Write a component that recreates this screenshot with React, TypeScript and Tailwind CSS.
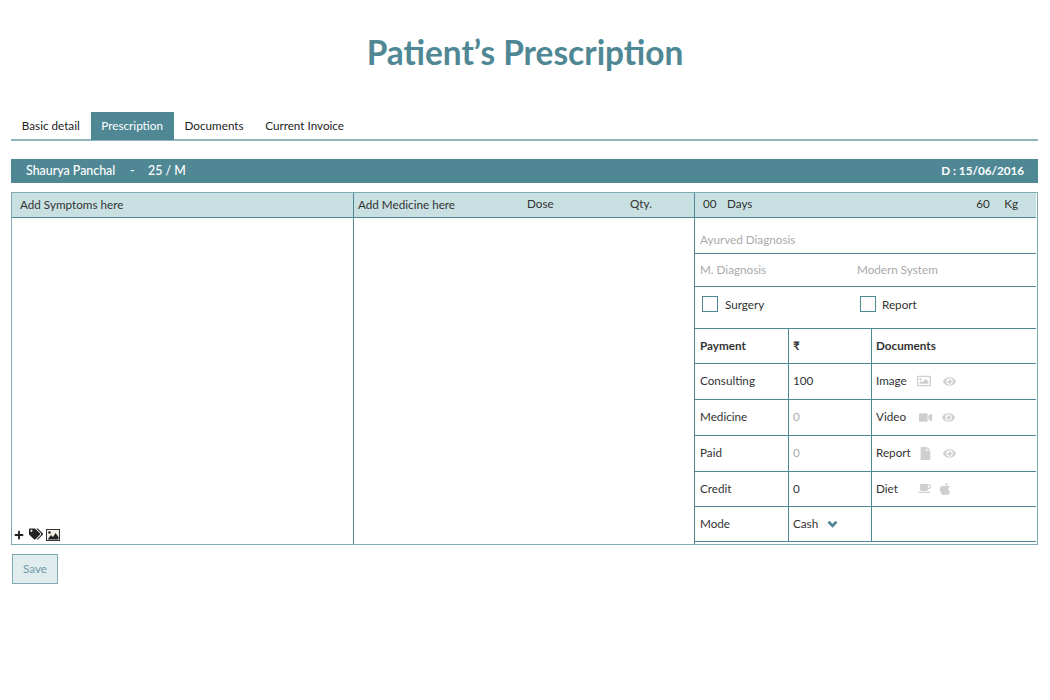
import { ReactNode } from "react";
import { FaPlus, FaTags, FaRegImage, FaEye, FaVideo, FaFile, FaCoffee, FaApple } from "react-icons/fa";

const TABS = ["Basic detail", "Prescription", "Documents", "Current Invoice"];

function Eye({ ml }: { ml: string }) {
  return <FaEye className={`${ml} text-[13px] text-[#cfcfcf]`} />;
}

function PayRow({ label, value, muted, bold, h, children }: { label: string; value: ReactNode; muted?: boolean; bold?: boolean; h: string; children?: ReactNode }) {
  return (
    <div className={`flex ${h} border-b border-[#4f8894] items-center`}>
      <div className={`w-[94px] h-full flex items-center pl-[5px] pb-[1px] border-r border-[#4f8894] ${bold ? "font-bold" : ""}`}>{label}</div>
      <div className={`w-[83px] h-full flex items-center pl-[4px] pb-[1px] border-r border-[#4f8894] ${muted ? "text-[#aaaaaa]" : ""}`}>{value}</div>
      <div className="flex-1 h-full flex items-center pl-[4px] pb-[1px]">{children}</div>
    </div>
  );
}

export default function App() {
  return (
    <div className="min-h-[700px] bg-white px-[11px] text-[11.7px] text-[#333333] [font-family:Lato,'Noto_Sans',sans-serif]">
      <h1 className="pt-[30px] h-[112px] text-center text-[33.4px] leading-[44px] font-bold text-[#4f8894]">Patient’s Prescription</h1>

      <div className="flex h-[29px] border-b-2 border-[#8fb6bd] w-[1027px]">
        {TABS.map((t) => (
          <div key={t} className={`h-[28px] px-[10.8px] flex items-center ${t === "Prescription" ? "bg-[#4f8894] text-white" : "text-[#222222]"}`}>{t}</div>
        ))}
      </div>

      <div className="mt-[18px] h-[24px] w-[1027px] bg-[#4f8894] text-white text-[12.4px] font-medium flex items-center justify-between pl-[15px] pr-[14px]">
        <span className="flex">
          <span className="w-[104px]">Shaurya Panchal</span>
          <span className="w-[18px]">-</span>
          <span>25 / M</span>
        </span>
        <span className="font-bold text-[11.7px]">D : 15/06/2016</span>
      </div>

      <div className="mt-[9px] w-[1027px] h-[353px] border border-[#7fabb3] flex">
        <div className="w-[342px] border-r border-[#4f8894] flex flex-col">
          <div className="h-[25px] bg-[#c8e0e2] border-b border-[#4f8894] pl-[8px] flex items-center">Add Symptoms here</div>
          <div className="flex-1 flex items-end pl-[2px] pb-[3px] text-[#222222]">
            <FaPlus className="text-[10px] mb-[1px]" />
            <FaTags className="ml-[5px] text-[14px]" />
            <svg viewBox="0 0 14 12" className="ml-[3px] w-[14px] h-[12px]">
              <rect x="0.5" y="0.5" width="13" height="11" fill="#f4f0e8" stroke="#333333" />
              <circle cx="3.5" cy="3.5" r="1.3" fill="#222222" />
              <path d="M1.5 10.5 L5 6 L7 8 L9.5 4 L12.5 8 V10.5 Z" fill="#222222" />
            </svg>
          </div>
        </div>
        <div className="w-[341px] border-r border-[#4f8894] flex flex-col">
          <div className="h-[25px] bg-[#c8e0e2] border-b border-[#4f8894] flex items-center relative">
            <span className="pl-[4px] w-[173px]">Add Medicine here</span>
            <span className="w-[103px] mb-[3px]">Dose</span>
            <span className="mb-[3px]">Qty.</span>
          </div>
        </div>
        <div className="flex-1 flex flex-col pr-[1px]">
          <div className="h-[25px] bg-[#c8e0e2] border-b border-[#4f8894] flex items-center pb-[2px] pl-[8px] pr-[18px]">
            <span className="w-[24px]">00</span>
            <span>Days</span>
            <span className="ml-auto w-[28px]">60</span>
            <span>Kg</span>
          </div>
          <div className="h-[36px] border-b border-[#4f8894] flex items-center pl-[5px] pt-[9px] text-[#aaaaaa]">Ayurved Diagnosis</div>
          <div className="h-[33px] border-b border-[#4f8894] flex items-center pl-[5px] text-[#aaaaaa]">
            <span className="w-[157px]">M. Diagnosis</span>
            <span>Modern System</span>
          </div>
          <div className="h-[42px] border-b border-[#4f8894] flex items-start pt-[9px] pl-[7px]">
            <span className="w-[16px] h-[16px] border border-[#4f8894] mr-[7px]" />
            <span className="w-[135px]">Surgery</span>
            <span className="w-[16px] h-[16px] border border-[#4f8894] mr-[6px]" />
            <span>Report</span>
          </div>
          <PayRow label="Payment" value={<b>₹</b>} bold h="h-[35px]">
            <b>Documents</b>
          </PayRow>
          <PayRow label="Consulting" value="100" h="h-[36px]">
            <span className="w-[41px]">Image</span>
            <FaRegImage className="text-[14px] text-[#cfcfcf]" />
            <Eye ml="ml-[12px]" />
          </PayRow>
          <PayRow label="Medicine" value="0" muted h="h-[36px]">
            <span className="w-[43px]">Video</span>
            <FaVideo className="text-[13px] text-[#cfcfcf]" />
            <Eye ml="ml-[10px]" />
          </PayRow>
          <PayRow label="Paid" value="0" muted h="h-[36px]">
            <span className="w-[43px]">Report</span>
            <FaFile className="text-[13px] text-[#cfcfcf]" />
            <Eye ml="ml-[11px]" />
          </PayRow>
          <PayRow label="Credit" value="0" h="h-[35px]">
            <span className="w-[42px]">Diet</span>
            <FaCoffee className="text-[13px] text-[#cfcfcf]" />
            <FaApple className="ml-[7px] text-[14px] text-[#cfcfcf]" />
          </PayRow>
          <PayRow
            label="Mode"
            value={
              <>
                Cash
                <svg viewBox="0 0 12 9" className="ml-[9px] mt-[1px] w-[11px] h-[8px]">
                  <path d="M1.5 2 L6 6.5 L10.5 2" fill="none" stroke="#4f8894" strokeWidth="3" />
                </svg>
              </>
            }
            h="h-[35px]"
          />
        </div>
      </div>

      <button className="mt-[9px] ml-[1px] w-[46px] h-[30px] bg-[#e0ecee] border border-[#7fabb3] text-[#6d9aa3]">Save</button>
    </div>
  );
}
